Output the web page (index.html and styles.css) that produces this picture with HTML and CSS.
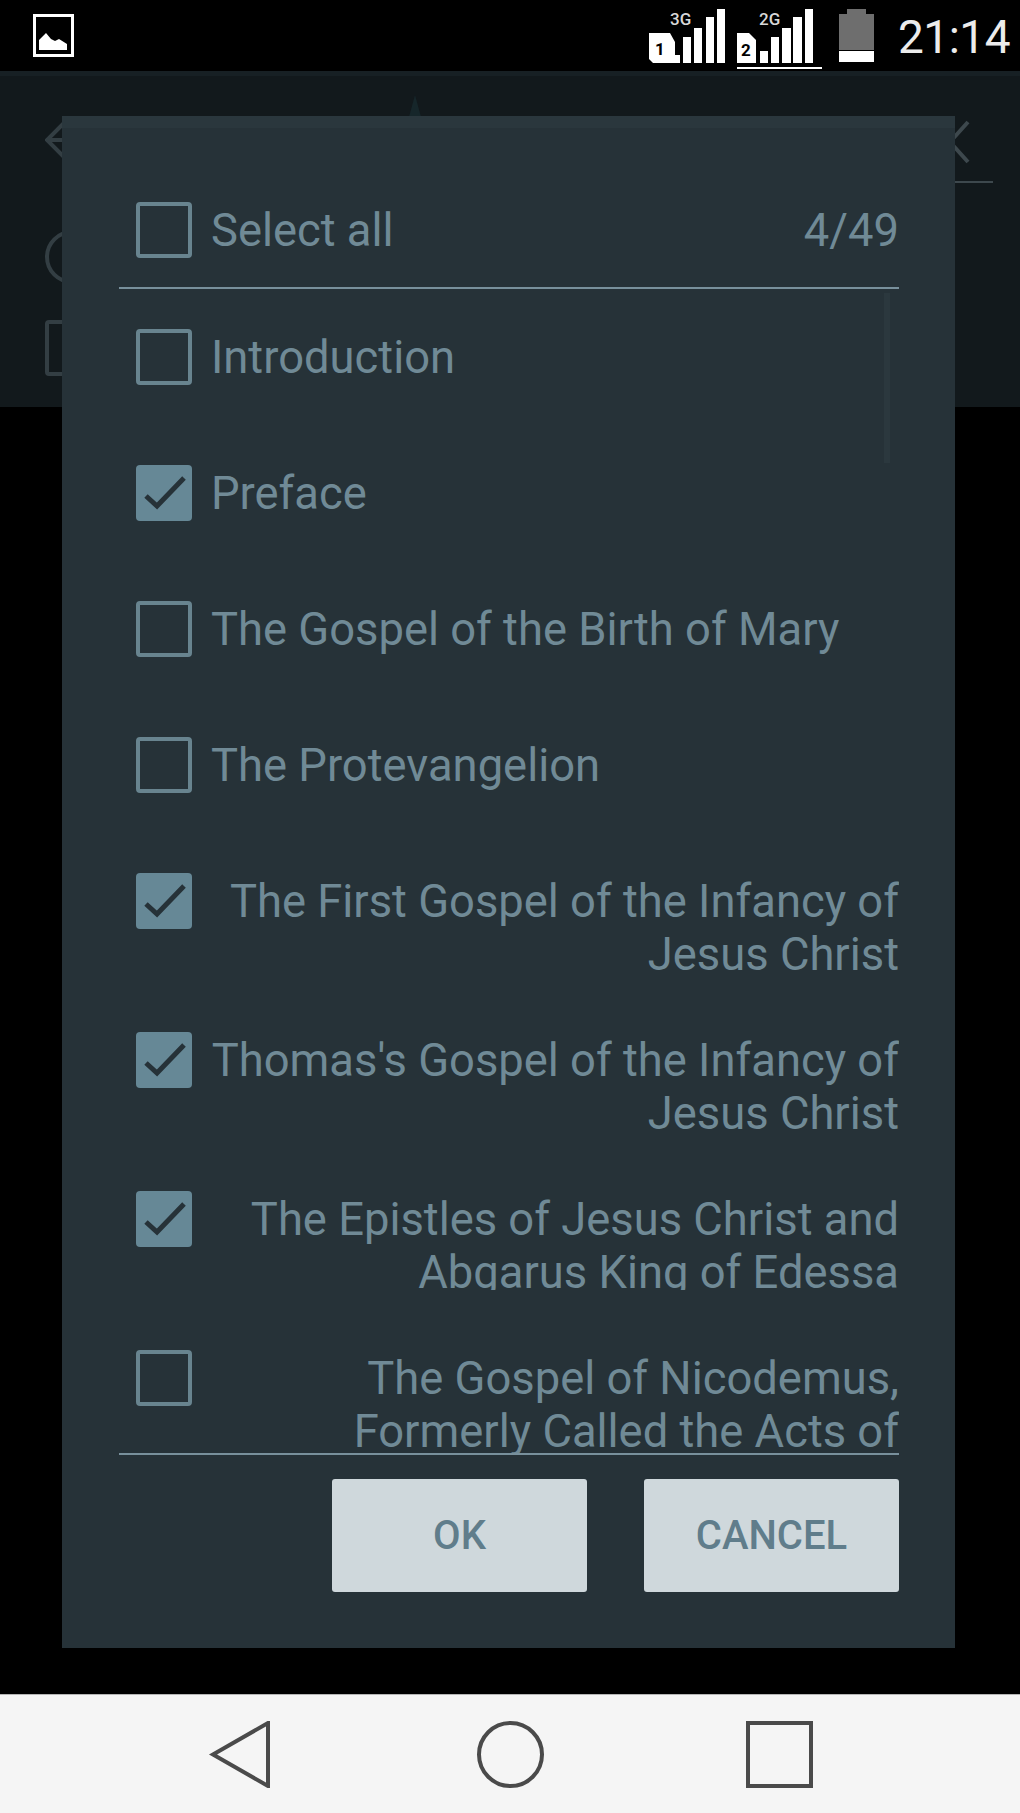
FILE: index.html
```html
<!DOCTYPE html>
<html lang="en">
<head>
<meta charset="utf-8">
<title>Select chapters</title>
<link rel="stylesheet" href="styles.css">
</head>
<body>
<div class="screen">
  <header class="status">
    <svg class="pic-icon" viewBox="0 0 41 43" width="41" height="43" aria-hidden="true">
      <rect x="1.5" y="1.5" width="38" height="40" fill="none" stroke="#fff" stroke-width="3"/>
      <path d="M6 36V26L13 19L18 25L22 27L26 25L34 30V36Z" fill="#fff"/>
    </svg>
    <div class="status-right">
      <svg class="signal" viewBox="0 0 78 56" width="78" height="56" aria-hidden="true">
        <text x="22" y="17" class="net">3G</text>
        <path d="M1 25H22L27 34V47H32V55H5L1 51Z" fill="#fff"/>
        <text x="7" y="47" class="sim">1</text>
        <rect x="35" y="29" width="8" height="26" fill="#fff"/>
        <rect x="46" y="20" width="8" height="35" fill="#fff"/>
        <rect x="58" y="9" width="8" height="46" fill="#fff"/>
        <rect x="69" y="1" width="8" height="54" fill="#fff"/>
      </svg>
      <div class="signal-active">
        <svg class="signal" viewBox="0 0 78 56" width="78" height="56" aria-hidden="true">
          <text x="22" y="17" class="net">2G</text>
          <path d="M0 25H12L19 32V55H0Z" fill="#fff"/>
          <text x="4" y="48" class="sim">2</text>
          <rect x="23" y="43" width="8" height="12" fill="#fff"/>
          <rect x="34" y="29" width="8" height="26" fill="#fff"/>
          <rect x="45" y="20" width="9" height="35" fill="#fff"/>
          <rect x="56" y="9" width="9" height="46" fill="#fff"/>
          <rect x="68" y="1" width="8" height="54" fill="#fff"/>
        </svg>
      </div>
      <svg class="battery" viewBox="0 0 35 53" width="35" height="53" aria-hidden="true">
        <path d="M8 0H27V5H35V41H0V5H8Z" fill="#6e6e6e"/>
        <rect x="0" y="42" width="35" height="11" fill="#fff"/>
      </svg>
      <span class="clock">21:14</span>
    </div>
  </header>

  <section class="appbar" aria-hidden="true">
    <div class="search-row">
      <svg class="back" viewBox="0 0 42 42" width="42" height="42">
        <path d="M21 2L2 21L21 40M2 21H40" fill="none" stroke="#333e43" stroke-width="4"/>
      </svg>
      <svg class="caret" viewBox="0 0 24 22" width="24" height="22">
        <path d="M12 0L18 22H6Z" fill="#16262a"/>
      </svg>
      <svg class="close" viewBox="0 0 40 44" width="40" height="44">
        <path d="M38 2L2 42M2 2L38 42" fill="none" stroke="#3d484d" stroke-width="4"/>
      </svg>
    </div>
    <div class="search-rule"></div>
    <div class="ghost-circle"></div>
    <div class="ghost-box"></div>
  </section>

  <div class="backdrop"></div>

  <nav class="navbar" aria-label="Navigation">
    <svg viewBox="0 0 67 67" width="67" height="67" aria-hidden="true">
      <path d="M5 33.5L60 2V65Z" class="nav-stroke"/>
    </svg>
    <svg viewBox="0 0 67 67" width="67" height="67" aria-hidden="true">
      <circle cx="33.5" cy="33.5" r="31.5" class="nav-stroke"/>
    </svg>
    <svg viewBox="0 0 67 67" width="67" height="67" aria-hidden="true">
      <rect x="2" y="2" width="63" height="63" class="nav-stroke"/>
    </svg>
  </nav>

  <div class="dialog" role="dialog">
    <div class="dialog-head">
      <span class="check"></span>
      <span class="label">Select all</span>
      <span class="count">4/49</span>
    </div>
    <div class="list">
      <div class="scrollbar"></div>
      <div class="row"><span class="check"></span><span class="label">Introduction</span></div>
      <div class="row"><span class="check on"><svg viewBox="0 0 56 56" width="56" height="56"><path d="M10 31L21 41L48 13"/></svg></span><span class="label">Preface</span></div>
      <div class="row"><span class="check"></span><span class="label">The Gospel of the Birth of Mary</span></div>
      <div class="row"><span class="check"></span><span class="label">The Protevangelion</span></div>
      <div class="row two"><span class="check on"><svg viewBox="0 0 56 56" width="56" height="56"><path d="M10 31L21 41L48 13"/></svg></span><span class="label wrap">The First Gospel of the Infancy of Jesus Christ</span></div>
      <div class="row two"><span class="check on"><svg viewBox="0 0 56 56" width="56" height="56"><path d="M10 31L21 41L48 13"/></svg></span><span class="label wrap">Thomas's Gospel of the Infancy of Jesus Christ</span></div>
      <div class="row two"><span class="check on"><svg viewBox="0 0 56 56" width="56" height="56"><path d="M10 31L21 41L48 13"/></svg></span><span class="label wrap cut">The Epistles of Jesus Christ and Abgarus King of Edessa</span></div>
      <div class="row two"><span class="check"></span><span class="label wrap">The Gospel of Nicodemus, Formerly Called the Acts of Pontius Pilate</span></div>
    </div>
    <div class="actions">
      <button class="btn" type="button">OK</button>
      <button class="btn" type="button">CANCEL</button>
    </div>
  </div>
</div>
</body>
</html>
```

FILE: styles.css
```css
* { box-sizing: border-box; }

html, body {
  margin: 0;
  padding: 0;
  background: #000;
}

.screen {
  position: relative;
  width: 1020px;
  height: 1813px;
  display: flex;
  flex-direction: column;
  overflow: hidden;
  font-family: Roboto, "Liberation Sans", sans-serif;
}

/* status bar */
.status {
  height: 71px;
  flex: none;
  background: #000;
  display: flex;
  align-items: flex-start;
  justify-content: space-between;
  padding: 14px 10px 0 33px;
}

.status-right {
  display: flex;
  align-items: flex-start;
  margin-top: -6px;
}

.signal { display: block; }

.signal-active {
  margin-left: 11px;
  padding: 0 6px 3px 0;
  border-bottom: 2px solid #fff;
  width: 85px;
  height: 61px;
}

.net {
  font-family: Roboto, "Liberation Sans", sans-serif;
  font-size: 17px;
  font-weight: 500;
  fill: #d8d8d8;
}

.sim {
  font-family: Roboto, "Liberation Sans", sans-serif;
  font-size: 17px;
  font-weight: 700;
  fill: #000;
}

.battery {
  margin-left: 17px;
  margin-top: 1px;
}

.clock {
  margin-left: 24px;
  font-size: 46px;
  line-height: 54px;
  margin-top: 2px;
  color: #ececec;
  letter-spacing: -0.5px;
}

/* dimmed app bar behind the dialog */
.appbar {
  height: 336px;
  flex: none;
  background: #12191c;
  border-top: 5px solid #172024;
  padding: 0 27px 0 45px;
}

.search-row {
  height: 105px;
  display: flex;
  align-items: flex-start;
  padding-top: 43px;
}

.search-rule {
  height: 2px;
  margin-left: 100px;
  background: #3d484d;
}

.caret {
  margin-left: 316px;
  margin-top: -24px;
}

.close {
  margin-left: auto;
  margin-right: 23px;
  margin-top: 1px;
}

.ghost-circle {
  width: 54px;
  height: 54px;
  margin-top: 47px;
  border: 4px solid #333e43;
  border-radius: 50%;
}

.ghost-box {
  width: 56px;
  height: 56px;
  margin-top: 36px;
  border: 4px solid #333e43;
  border-radius: 4px;
}

.backdrop {
  flex: 1;
  background: #000;
}

/* bottom navigation */
.navbar {
  height: 119px;
  flex: none;
  background: #f5f5f5;
  border-top: 1px solid #b5b5b5;
  display: flex;
  align-items: flex-start;
  justify-content: center;
  gap: 202px;
  padding-top: 26px;
}

.nav-stroke {
  fill: none;
  stroke: #4a4a4a;
  stroke-width: 4;
}

/* dialog */
.dialog {
  position: absolute;
  left: 62px;
  top: 116px;
  width: 893px;
  height: 1532px;
  background: #263238;
  border-top: 12px solid #2a373d;
  padding: 0 56px 0 57px;
  display: flex;
  flex-direction: column;
}

.dialog-head {
  height: 161px;
  flex: none;
  padding: 74px 0 0 17px;
  border-bottom: 2px solid #78909c;
  display: flex;
  align-items: flex-start;
}

.check {
  width: 56px;
  height: 56px;
  flex: none;
  border: 4px solid #68848f;
  border-radius: 4px;
  display: block;
}

.check.on {
  background: #668896;
  border: 0;
}

.check svg {
  display: block;
}

.check path {
  fill: none;
  stroke: #263238;
  stroke-width: 5;
}

.label {
  margin: 2px 0 0 19px;
  font-size: 45.35px;
  line-height: 53px;
  color: #708a96;
}

.count {
  margin: 2px 0 0 auto;
  font-size: 45.35px;
  line-height: 53px;
  color: #708a96;
}

.list {
  position: relative;
  height: 1166px;
  flex: none;
  overflow: hidden;
  border-bottom: 2px solid #78909c;
}

.scrollbar {
  position: absolute;
  right: 9px;
  top: 4px;
  width: 6px;
  height: 170px;
  background: #2b383e;
}

.row {
  min-height: 136px;
  padding: 40px 0 0 17px;
  display: flex;
  align-items: flex-start;
}

.row.two {
  height: 159px;
}

.wrap {
  flex: 1;
  text-align: right;
}

.cut {
  height: 97px;
  overflow: hidden;
}

.actions {
  margin-top: 24px;
  display: flex;
  justify-content: flex-end;
  gap: 57px;
}

.btn {
  width: 255px;
  height: 113px;
  padding: 0;
  border: 0;
  border-radius: 3px;
  background: #cfd8dc;
  color: #607d8b;
  font-family: Roboto, "Liberation Sans", sans-serif;
  font-size: 40px;
  font-weight: 500;
}
```
